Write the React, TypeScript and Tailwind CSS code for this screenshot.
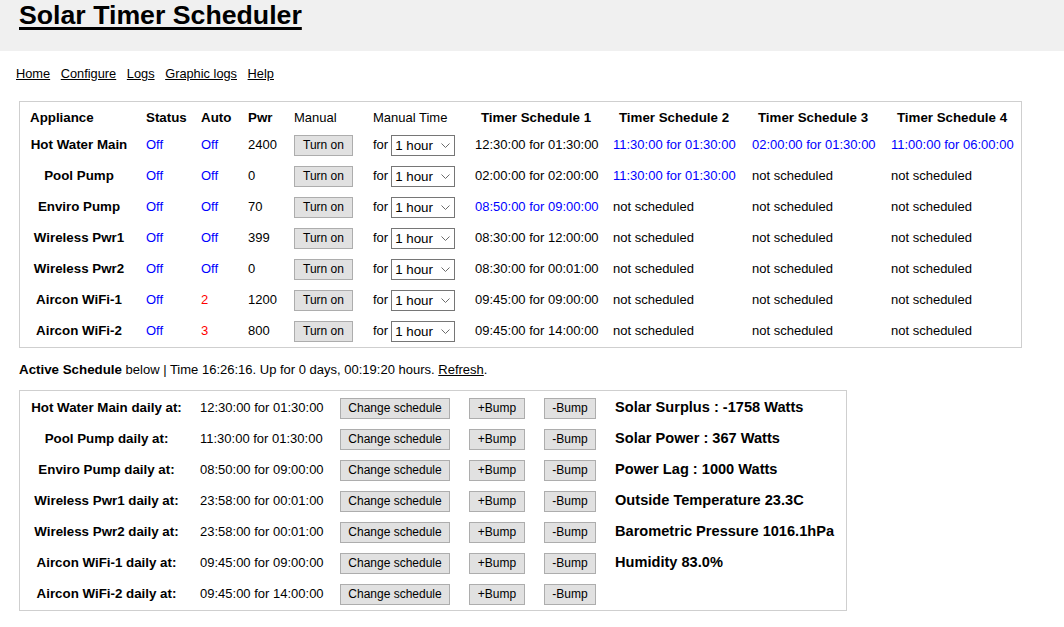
import React from "react";

const appliances = [
  { name: "Hot Water Main", status: "Off", auto: "Off", pwr: "2400", timers: [["12:30:00 for 01:30:00", false], ["11:30:00 for 01:30:00", true], ["02:00:00 for 01:30:00", true], ["11:00:00 for 06:00:00", true]] },
  { name: "Pool Pump", status: "Off", auto: "Off", pwr: "0", timers: [["02:00:00 for 02:00:00", false], ["11:30:00 for 01:30:00", true], ["not scheduled", false], ["not scheduled", false]] },
  { name: "Enviro Pump", status: "Off", auto: "Off", pwr: "70", timers: [["08:50:00 for 09:00:00", true], ["not scheduled", false], ["not scheduled", false], ["not scheduled", false]] },
  { name: "Wireless Pwr1", status: "Off", auto: "Off", pwr: "399", timers: [["08:30:00 for 12:00:00", false], ["not scheduled", false], ["not scheduled", false], ["not scheduled", false]] },
  { name: "Wireless Pwr2", status: "Off", auto: "Off", pwr: "0", timers: [["08:30:00 for 00:01:00", false], ["not scheduled", false], ["not scheduled", false], ["not scheduled", false]] },
  { name: "Aircon WiFi-1", status: "Off", auto: "2", pwr: "1200", timers: [["09:45:00 for 09:00:00", false], ["not scheduled", false], ["not scheduled", false], ["not scheduled", false]] },
  { name: "Aircon WiFi-2", status: "Off", auto: "3", pwr: "800", timers: [["09:45:00 for 14:00:00", false], ["not scheduled", false], ["not scheduled", false], ["not scheduled", false]] },
] as const;

const active = [
  ["Hot Water Main", "12:30:00 for 01:30:00", "Solar Surplus : -1758 Watts"],
  ["Pool Pump", "11:30:00 for 01:30:00", "Solar Power : 367 Watts"],
  ["Enviro Pump", "08:50:00 for 09:00:00", "Power Lag : 1000 Watts"],
  ["Wireless Pwr1", "23:58:00 for 00:01:00", "Outside Temperature 23.3C"],
  ["Wireless Pwr2", "23:58:00 for 00:01:00", "Barometric Pressure 1016.1hPa"],
  ["Aircon WiFi-1", "09:45:00 for 09:00:00", "Humidity 83.0%"],
  ["Aircon WiFi-2", "09:45:00 for 14:00:00", ""],
];

const cols1 = "grid grid-cols-[116px_55px_47px_46px_79px_102px_138px_139px_139px_122px] items-center whitespace-nowrap";
const cols2 = "grid grid-cols-[170px_140px_129px_75px_71px_1fr] items-center whitespace-nowrap";
const btn = "h-[21px] bg-[#e1e1e1] border border-[#adadad] text-[12px] text-black flex items-center justify-center";

function HourSelect() {
  return (
    <div className="relative w-[64px] h-[21px]">
      <select className="appearance-none w-full h-full border border-[#767676] bg-white pl-[3px] text-[13.33px] text-black outline-none">
        <option>1 hour</option>
        <option>2 hours</option>
        <option>3 hours</option>
      </select>
      <svg className="absolute right-[5px] top-[8px] pointer-events-none" width="9" height="5" viewBox="0 0 9 5">
        <polyline points="0.5,0.5 4.5,4.5 8.5,0.5" fill="none" stroke="#6b6b6b" strokeWidth="1" />
      </svg>
    </div>
  );
}

export default function App() {
  return (
    <div className="min-h-screen bg-white text-black font-['Liberation_Sans',Arial,sans-serif] text-[13px]">
      <div className="h-[51px] bg-[#f0f0f0] px-[19px]">
        <h1 className="text-[26.7px] font-bold leading-[1.15] underline decoration-[3px] underline-offset-[3px]">
          Solar Timer Scheduler
        </h1>
      </div>

      <nav className="mt-[16px] ml-[16px] flex gap-[10.6px] text-[12.8px] leading-[1.15]">
        <a href="#" className="underline">Home</a>
        <a href="#" className="underline">Configure</a>
        <a href="#" className="underline">Logs</a>
        <a href="#" className="underline">Graphic logs</a>
        <a href="#" className="underline">Help</a>
      </nav>

      <div className="mt-[19px] ml-[19px] w-[1003px] border border-[#cfcfcf] pl-[10px] pt-[4px]">
        <div className={`${cols1} h-[24px]`}>
          <div className="font-bold text-[13.33px]">Appliance</div>
          <div className="font-bold text-[13.33px]">Status</div>
          <div className="font-bold text-[13.33px]">Auto</div>
          <div className="font-bold text-[13.33px]">Pwr</div>
          <div>Manual</div>
          <div>Manual Time</div>
          {[1, 2, 3, 4].map((n) => (
            <div key={n} className="w-[122px] text-center font-bold text-[13.33px]">Timer Schedule {n}</div>
          ))}
        </div>
        {appliances.map((a) => (
          <div key={a.name} className={`${cols1} h-[31px]`}>
            <div className="w-[98px] text-center font-bold text-[13.33px]">{a.name}</div>
            <div className="text-[#0000ff]">{a.status}</div>
            <div className={a.auto === "Off" ? "text-[#0000ff]" : "text-[#ff0000]"}>{a.auto}</div>
            <div>{a.pwr}</div>
            <div>
              <button className={`${btn} w-[59px] text-[12.5px]`}>Turn on</button>
            </div>
            <div className="flex items-center gap-[3px]">
              <span>for</span>
              <HourSelect />
            </div>
            {a.timers.map(([t, blue], i) => (
              <div key={i} className={blue ? "text-[#0000ff]" : ""}>{t}</div>
            ))}
          </div>
        ))}
      </div>

      <p className="mt-[14px] ml-[19px] leading-[1.15]">
        <b className="text-[13.33px]">Active Schedule</b> below | Time 16:26:16. Up for 0 days, 00:19:20 hours.{" "}
        <a href="#" className="underline">Refresh</a>.
      </p>

      <div className="mt-[12px] ml-[19px] w-[828px] border border-[#cfcfcf] pl-[10px] pt-[2px]">
        {active.map(([name, time, stat]) => (
          <div key={name} className={`${cols2} h-[31px]`}>
            <div className="w-[153px] text-center font-bold text-[13.33px]">{name} daily at:</div>
            <div>{time}</div>
            <div>
              <button className={`${btn} w-[110px]`}>Change schedule</button>
            </div>
            <div>
              <button className={`${btn} w-[56px]`}>+Bump</button>
            </div>
            <div>
              <button className={`${btn} w-[52px]`}>-Bump</button>
            </div>
            <div className="text-[14.6px] font-bold">{stat}</div>
          </div>
        ))}
      </div>
    </div>
  );
}
